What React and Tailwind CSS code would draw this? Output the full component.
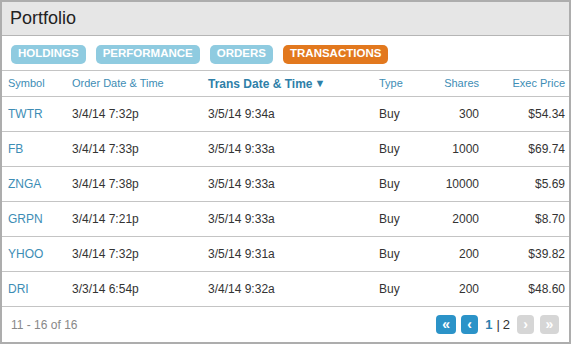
import React from "react";

const rows = [
  ["TWTR", "3/4/14 7:32p", "3/5/14 9:34a", "Buy", "300", "$54.34"],
  ["FB", "3/4/14 7:33p", "3/5/14 9:33a", "Buy", "1000", "$69.74"],
  ["ZNGA", "3/4/14 7:38p", "3/5/14 9:33a", "Buy", "10000", "$5.69"],
  ["GRPN", "3/4/14 7:21p", "3/5/14 9:33a", "Buy", "2000", "$8.70"],
  ["YHOO", "3/4/14 7:32p", "3/5/14 9:31a", "Buy", "200", "$39.82"],
  ["DRI", "3/3/14 6:54p", "3/4/14 9:32a", "Buy", "200", "$48.60"],
];

function Tab({ label, active }) {
  return (
    <div
      className={
        "h-[19px] px-[7px] rounded-[5px] flex items-center text-[11.5px] font-bold text-white " +
        (active ? "bg-[#e2781e]" : "bg-[#8fcbe0]")
      }
    >
      {label}
    </div>
  );
}

const btn =
  "h-[19px] rounded-[4px] text-white flex items-center justify-center text-[14px] font-bold leading-none pb-[2px]";

export default function App() {
  return (
    <div
      className="w-[573px] h-[346px] bg-white"
      style={{ fontFamily: '"Liberation Sans", Arial, sans-serif' }}
    >
      <div className="w-[571px] h-[344px] border-[2px] border-[#adadad] flex flex-col">
        <div className="h-[34px] bg-[#e6e6e6] border-b border-[#b5b5b5] flex items-center pl-[8px] text-[18px] text-[#222]">
          Portfolio
        </div>
        <div className="h-[35px] border-b border-[#c4c4c4] flex items-center gap-[10px] pl-[9px] pt-[2px]">
          <Tab label="HOLDINGS" />
          <Tab label="PERFORMANCE" />
          <Tab label="ORDERS" />
          <Tab label="TRANSACTIONS" active />
        </div>
        <div className="h-[26px] border-b border-[#c4c4c4] flex items-center text-[11px] text-[#3d8db5]">
          <div className="w-[64px] pl-[6px]">Symbol</div>
          <div className="w-[136px] pl-[6px]">Order Date &amp; Time</div>
          <div className="w-[171px] pl-[6px] font-bold text-[12px] text-[#2f7fa8] flex items-center">
            Trans Date &amp; Time
            <span className="ml-[2px] text-[11px]">▼</span>
          </div>
          <div className="w-[60px] pl-[6px]">Type</div>
          <div className="w-[46px] text-right">Shares</div>
          <div className="w-[86px] text-right">Exec Price</div>
        </div>
        {rows.map((r) => (
          <div
            key={r[0]}
            className="h-[35px] border-b border-[#c4c4c4] flex items-center text-[12px] text-[#333]"
          >
            <div className="w-[64px] pl-[6px] text-[#3d8db5]">{r[0]}</div>
            <div className="w-[136px] pl-[6px]">{r[1]}</div>
            <div className="w-[171px] pl-[6px]">{r[2]}</div>
            <div className="w-[60px] pl-[6px]">{r[3]}</div>
            <div className="w-[46px] text-right">{r[4]}</div>
            <div className="w-[86px] text-right">{r[5]}</div>
          </div>
        ))}
        <div className="flex-1 flex items-center justify-between pl-[9px] pr-[10px]">
          <div className="text-[12px] text-[#888]">11 - 16 of 16</div>
          <div className="flex items-center">
            <div className={btn + " w-[20px] bg-[#2b93c8]"}>«</div>
            <div className={btn + " ml-[5px] w-[17px] bg-[#2b93c8]"}>‹</div>
            <div className="ml-[7px] text-[13px] font-bold text-[#2b7fae]">1</div>
            <div className="ml-[4px] text-[13px] text-[#333]">|</div>
            <div className="ml-[3px] text-[13px] text-[#333]">2</div>
            <div className={btn + " ml-[7px] w-[17px] bg-[#d6d6d6]"}>›</div>
            <div className={btn + " ml-[6px] w-[19px] bg-[#d6d6d6]"}>»</div>
          </div>
        </div>
      </div>
    </div>
  );
}
